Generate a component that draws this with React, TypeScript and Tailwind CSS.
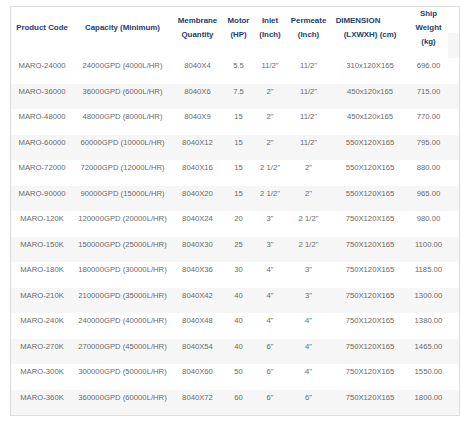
const COLS = "grid grid-cols-[62px_99px_51px_31px_32px_45px_78px_39px_11px]";

interface SpecRow {
  code: string;
  capacity: string;
  membrane: string;
  motor: string;
  inlet: string;
  permeate: string;
  dimension: string;
  weight: string;
}

const rows: SpecRow[] = [
  { code: "MARO-24000", capacity: "24000GPD (4000L/HR)", membrane: "8040X4", motor: "5.5", inlet: '11/2"', permeate: '11/2"', dimension: "310x120X165", weight: "696.00" },
  { code: "MARO-36000", capacity: "36000GPD (6000L/HR)", membrane: "8040X6", motor: "7.5", inlet: '2"', permeate: '11/2"', dimension: "450x120x165", weight: "715.00" },
  { code: "MARO-48000", capacity: "48000GPD (8000L/HR)", membrane: "8040X9", motor: "15", inlet: '2"', permeate: '11/2"', dimension: "450x120x165", weight: "770.00" },
  { code: "MARO-60000", capacity: "60000GPD (10000L/HR)", membrane: "8040X12", motor: "15", inlet: '2"', permeate: '11/2"', dimension: "550X120X165", weight: "795.00" },
  { code: "MARO-72000", capacity: "72000GPD (12000L/HR)", membrane: "8040X16", motor: "15", inlet: '2 1/2"', permeate: '2"', dimension: "550X120X165", weight: "880.00" },
  { code: "MARO-90000", capacity: "90000GPD (15000L/HR)", membrane: "8040X20", motor: "15", inlet: '2 1/2"', permeate: '2"', dimension: "550X120X165", weight: "965.00" },
  { code: "MARO-120K", capacity: "120000GPD (20000L/HR)", membrane: "8040X24", motor: "20", inlet: '3"', permeate: '2 1/2"', dimension: "750X120X165", weight: "980.00" },
  { code: "MARO-150K", capacity: "150000GPD (25000L/HR)", membrane: "8040X30", motor: "25", inlet: '3"', permeate: '2 1/2"', dimension: "750X120X165", weight: "1100.00" },
  { code: "MARO-180K", capacity: "180000GPD (30000L/HR)", membrane: "8040X36", motor: "30", inlet: '4"', permeate: '3"', dimension: "750X120X165", weight: "1185.00" },
  { code: "MARO-210K", capacity: "210000GPD (35000L/HR)", membrane: "8040X42", motor: "40", inlet: '4"', permeate: '3"', dimension: "750X120X165", weight: "1300.00" },
  { code: "MARO-240K", capacity: "240000GPD (40000L/HR)", membrane: "8040X48", motor: "40", inlet: '4"', permeate: '4"', dimension: "750X120X165", weight: "1380.00" },
  { code: "MARO-270K", capacity: "270000GPD (45000L/HR)", membrane: "8040X54", motor: "40", inlet: '6"', permeate: '4"', dimension: "750X120X165", weight: "1465.00" },
  { code: "MARO-300K", capacity: "300000GPD (50000L/HR)", membrane: "8040X60", motor: "50", inlet: '6"', permeate: '4"', dimension: "750X120X165", weight: "1550.00" },
  { code: "MARO-360K", capacity: "360000GPD (60000L/HR)", membrane: "8040X72", motor: "60", inlet: '6"', permeate: '6"', dimension: "750X120X165", weight: "1800.00" },
];

function HeadCell({ children }: { children: React.ReactNode }) {
  return (
    <div className="row-span-2 flex flex-col items-center justify-center pb-[9px] text-center leading-[14px]">
      {children}
    </div>
  );
}

export default function App() {
  return (
    <div className="bg-white pl-[10px] pt-[6px] pb-[8px] font-['Liberation_Sans',Arial,sans-serif]">
      <div className="w-[450px] border border-[#dddddd]">

        {/* cabecera: dos filas, la última columna queda vacía */}
        <div className={`${COLS} grid-rows-[25.5px_25.5px] text-[7.9px] font-bold text-[#23406e]`}>
          <HeadCell>Product Code</HeadCell>
          <HeadCell>Capacity (Minimum)</HeadCell>
          <HeadCell>
            <span>Membrane</span>
            <span>Quantity</span>
          </HeadCell>
          <HeadCell>
            <span>Motor</span>
            <span>(HP)</span>
          </HeadCell>
          <HeadCell>
            <span>Inlet</span>
            <span>(Inch)</span>
          </HeadCell>
          <HeadCell>
            <span>Permeate</span>
            <span>(Inch)</span>
          </HeadCell>
          <HeadCell>
            <span className="pr-[24px]">DIMENSION</span>
            <span>(LXWXH) (cm)</span>
          </HeadCell>
          <HeadCell>
            <span>Ship</span>
            <span>Weight</span>
            <span>(kg)</span>
          </HeadCell>
          <div />
          <div className="bg-[#f6f6f6]" />
        </div>

        {/* filas de datos */}
        {rows.map((row, index) => (
          <div
            key={row.code}
            className={`${COLS} h-[25.5px] text-[7.7px] leading-[15px] text-[#6b6b6b] text-center ${index % 2 === 1 ? "bg-[#f6f6f6]" : "bg-white"}`}
          >
            <div>{row.code}</div>
            <div className="whitespace-nowrap">{row.capacity}</div>
            <div>{row.membrane}</div>
            <div>{row.motor}</div>
            <div className="whitespace-nowrap">{row.inlet}</div>
            <div className="whitespace-nowrap">{row.permeate}</div>
            <div>{row.dimension}</div>
            <div>{row.weight}</div>
            <div />
          </div>
        ))}
      </div>
    </div>
  );
}
